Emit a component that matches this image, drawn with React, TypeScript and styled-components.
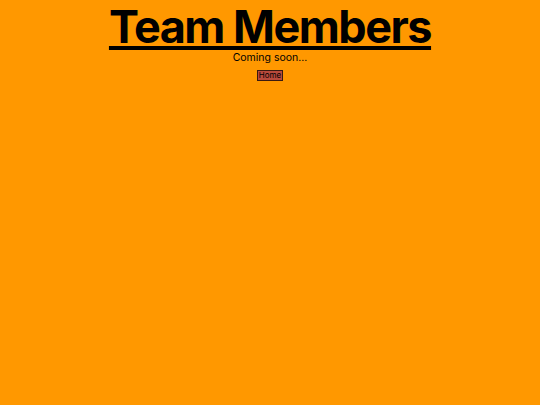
import styled, { createGlobalStyle } from "styled-components";

const GlobalStyle = createGlobalStyle`
  html, body {
    margin: 0;
    padding: 0;
    background: #ff9800;
  }
  body {
    font-family: Inter, "Noto Sans", sans-serif;
    color: #000;
  }
`;

const Page = styled.div`
  min-height: 405px;
  display: flex;
  flex-direction: column;
  align-items: center;
  background: #ff9800;
`;

const Title = styled.h1`
  margin: 0;
  padding-top: 1px;
  font-size: 45px;
  font-weight: 700;
  line-height: 52px;
  text-decoration: underline;
  text-decoration-thickness: 4px;
  text-underline-offset: 3px;
  letter-spacing: -1.5px;
`;

const Subtitle = styled.p`
  margin: 0;
  font-size: 10.5px;
  line-height: 10px;
`;

const HomeButton = styled.button`
  margin-top: 7px;
  padding: 0 1px;
  font-family: Inter, "Noto Sans", sans-serif;
  font-size: 8px;
  line-height: 9px;
  background: #b84a3c;
  color: #000;
  border: 1px solid #3a1a10;
  cursor: pointer;
`;

export default function App() {
  return (
    <>
      <GlobalStyle />
      <Page>
        <Title>Team Members</Title>
        <Subtitle>Coming soon...</Subtitle>
        <HomeButton>Home</HomeButton>
      </Page>
    </>
  );
}
